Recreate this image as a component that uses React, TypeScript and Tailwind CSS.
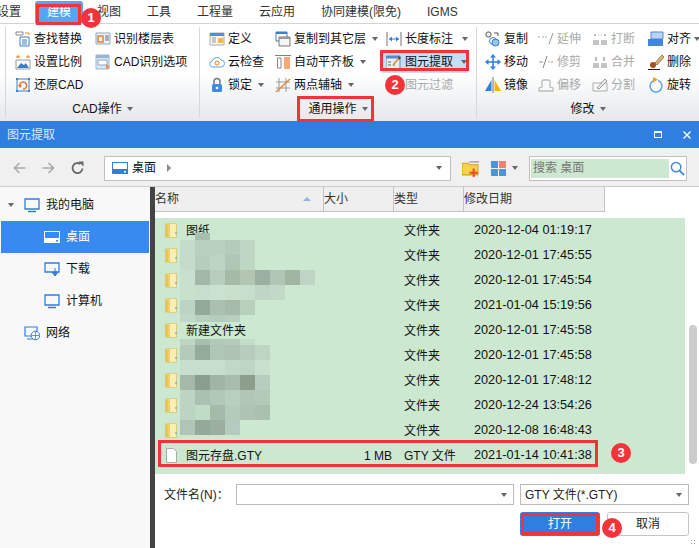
import type { ReactNode } from "react";

const Svg = ({ children, className = "w-4 h-4" }: { children: ReactNode; className?: string }) => (
  <svg viewBox="0 0 16 16" className={className} fill="none">
    {children}
  </svg>
);

const Caret = ({ className = "" }: { className?: string }) => (
  <span className={`inline-block w-0 h-0 border-x-[3.5px] border-x-transparent border-t-[4px] border-t-[#666] ${className}`} />
);

/* ribbon icons */
const icons: Record<string, ReactNode> = {
  find: (
    <>
      <path d="M1 1h7v3H1z" stroke="#888" />
      <path d="M10 2h4v2" stroke="#e8832a" />
      <path d="M5 6h9v9H5z" stroke="#3a7fc8" />
      <path d="M7 9h5M7 11h5M7 13h5" stroke="#3a7fc8" />
    </>
  ),
  floor: (
    <>
      <path d="M1 2h14v11H1z" fill="#eef3f8" stroke="#8aa6c4" />
      <path d="M3 5h5v6H3z" stroke="#e8832a" strokeWidth="1.5" />
      <path d="M10 5h4M10 7h4M10 9h4" stroke="#667" />
    </>
  ),
  scale: (
    <>
      <path d="M1 6h14v9H1z" fill="#fff" stroke="#999" />
      <path d="M2 14l4-5 3 2 2-2 3 5z" fill="#3a7fc8" />
      <path d="M3 1v3M13 1v3M1 3h4M11 3h4" stroke="#e8832a" />
    </>
  ),
  cadopt: (
    <>
      <path d="M1 1h13v14H1z" fill="#dce8f5" stroke="#9bb4d0" />
      <path d="M1 1h13v3H1z" fill="#9bb4d0" />
      <path d="M3 6h9v5H3z" fill="#fff" stroke="#8aa6c4" />
      <path d="M11 10l4 3-4 2z" fill="#f08a5a" />
    </>
  ),
  restore: (
    <>
      <path d="M2 2h12v12H2z" stroke="#3a7fc8" />
      <path d="M1 1h2v2H1zM13 1h2v2h-2zM1 13h2v2H1zM13 13h2v2h-2z" fill="#3a7fc8" />
      <path d="M5 10a3.500 3.500 0 1 1 3 2" stroke="#e8702a" strokeWidth="1.5" />
      <path d="M3 8h4l-2 3z" fill="#e8702a" />
    </>
  ),
  define: (
    <>
      <path d="M1 2h14v12H1z" fill="#f5f5f5" stroke="#aaa" />
      <path d="M1 2h14v3H1z" fill="#4a90e2" />
      <path d="M3 7h4M3 9h4M3 11h4" stroke="#999" />
      <path d="M9 7h5v5H9z" fill="#f5b942" />
    </>
  ),
  copyto: (
    <>
      <path d="M1 1h11v9H1z" fill="#fff" stroke="#3a7fc8" />
      <path d="M1 1h11v2H1z" fill="#3a7fc8" />
      <path d="M4 6h11v9H4z" fill="#f5f5f5" stroke="#777" />
      <path d="M4 6h11v2H4z" fill="#999" />
    </>
  ),
  cloud: (
    <>
      <path d="M4 13a3 3 0 0 1-.5-6A4.500 4.500 0 0 1 12 6a3.500 3.500 0 0 1 0 7z" fill="#fff" stroke="#5aa5e8" />
      <circle cx="8" cy="9" r="2" stroke="#e8832a" />
    </>
  ),
  align2: (
    <>
      <path d="M0 1.500h16" stroke="#5a8ac0" />
      <path d="M2.500 4h3.500v10H2.500z" stroke="#888" />
      <path d="M9 3h6v12H9z" fill="#f7a978" />
    </>
  ),
  lock: (
    <>
      <path d="M5 7V4.500a3 3 0 0 1 6 0V7" stroke="#777" strokeWidth="1.500" />
      <rect x="3" y="7" width="10" height="8" rx="1.500" fill="#3a8ae8" />
      <circle cx="8" cy="11" r="1.300" fill="#fff" />
    </>
  ),
  axis: (
    <>
      <path d="M4 1v14M11 1v14M1 5h14M1 11h14" stroke="#999" />
      <path d="M1 15L15 2" stroke="#e8832a" strokeWidth="1.200" />
    </>
  ),
  length: (
    <>
      <path d="M1 1v14M15 1v14" stroke="#777" />
      <path d="M3 8h10" stroke="#2f7fe0" />
      <path d="M3 8l3-2.500v5zM13 8l-3-2.500v5z" fill="#2f7fe0" />
    </>
  ),
  extract: (
    <>
      <path d="M0 2h14v13H0z" fill="#e6eef8" stroke="#5a8ac0" />
      <path d="M0 2h14v2.500H0z" fill="#5a8ac0" />
      <path d="M2 8h3M2 11h3M7 11h2" stroke="#666" />
      <path d="M7 11l6-7" stroke="#e8832a" strokeWidth="1.500" />
      <path d="M12 2l3 2-2 2z" fill="#444" />
    </>
  ),
  filter: <path d="M1 2h4v4H1z" stroke="#bbb" />,
  copy: (
    <>
      <rect x="1" y="1" width="5" height="5" rx="2" stroke="#555" />
      <path d="M9 2h4v3" stroke="#555" />
      <circle cx="8" cy="10" r="3.500" stroke="#2f7fe0" />
      <circle cx="10.500" cy="11.500" r="3.500" fill="#9cc4ee" stroke="#2f7fe0" />
    </>
  ),
  extend: (
    <>
      <path d="M0 6h2M4 6h2M7 6h2" stroke="#aaa" />
      <path d="M11 13l4-11" stroke="#999" />
    </>
  ),
  move: (
    <>
      <path d="M8 3v10M3 8h10" stroke="#2f7fe0" strokeWidth="1.500" />
      <path d="M8 0l3 3.500H5zM8 16l3-3.500H5zM0 8l3.500-3v6zM16 8l-3.500-3v6z" fill="#2f7fe0" />
    </>
  ),
  trim: (
    <>
      <path d="M1 8h4M10 8h1.500M13 8h2" stroke="#999" />
      <path d="M5 14L9 2" stroke="#888" />
    </>
  ),
  mirror: (
    <>
      <path d="M8 0v16" stroke="#777" />
      <path d="M6.500 14H0L6.500 3z" fill="#2f7fe0" />
      <path d="M9.500 14H16L9.500 3z" fill="#f5b400" />
    </>
  ),
  offset: <path d="M1 14v-3l3-1V6a2 2 0 0 1 2-3h4a2 2 0 0 1 2 3v4l3 1v3z" stroke="#bbb" strokeWidth="1.300" />,
  brk: (
    <>
      <path d="M1 9h6v5H1zM9 9h6v5H9z" fill="#c4c4c4" />
      <path d="M2 3h2v2H2zM12 3h2v2h-2z" fill="#bbb" />
      <path d="M6 4h1M9 4h1" stroke="#bbb" />
    </>
  ),
  merge: (
    <>
      <path d="M1 9h6v5H1zM9 9h6v5H9z" fill="#c4c4c4" />
      <path d="M3 3h2v4H3zM11 3h2v4h-2z" fill="#bbb" />
    </>
  ),
  split: (
    <>
      <path d="M1 6h14v8H1z" stroke="#aaa" />
      <path d="M5 11l8-9 2 2-8 8z" fill="#eee" stroke="#999" />
    </>
  ),
  align: (
    <>
      <path d="M3 1h12v7H3z" fill="#b8d4f4" stroke="#4a8ad8" />
      <path d="M0 8h15v7H0z" fill="#3f86dc" />
    </>
  ),
  del: (
    <>
      <path d="M7 9l7-8 2 2-7 8z" fill="#d8b67a" stroke="#7a5a30" strokeWidth="0.700" />
      <circle cx="5" cy="11" r="3" fill="#a8501e" />
      <path d="M0 15.500h12" stroke="#222" />
    </>
  ),
  rotate: (
    <>
      <path d="M6 3.500a6 6 0 1 0 4 0" stroke="#5aa5e8" strokeWidth="1.500" />
      <path d="M5 0l5 2.500-5 3z" fill="#f09a2a" />
    </>
  ),
};

const Tool = ({ icon, label, off, caret, gap = "ml-[6px]" }: { icon: string; label: string; off?: boolean; caret?: boolean; gap?: string }) => (
  <div className={`flex items-center h-[23px] whitespace-nowrap ${off ? "text-[#aaa]" : "text-[#111]"}`}>
    <span className="w-[19px] shrink-0">
      <Svg>{icons[icon]}</Svg>
    </span>
    {label}
    {caret && <Caret className={gap} />}
  </div>
);

const GroupLabel = ({ text }: { text: string }) => (
  <div className="h-[25px] flex items-center justify-center text-[#111]">
    {text}
    <Caret className="ml-[5px]" />
  </div>
);

const Sep = () => <div className="w-px h-[91px] bg-[#d6d8da] shrink-0" />;

const Ribbon = () => (
  <div className="h-[97px] flex pt-[3px] text-[12px] bg-gradient-to-b from-white via-white to-[#e6e8ea]">
    <div className="w-[5px] shrink-0" />
    <Sep />
    {/* CAD操作 */}
    <div className="w-[193px] shrink-0">
      <div className="pl-[9px] grid grid-cols-[80px_1fr]">
        <Tool icon="find" label="查找替换" />
        <Tool icon="floor" label="识别楼层表" />
        <Tool icon="scale" label="设置比例" />
        <Tool icon="cadopt" label="CAD识别选项" />
        <Tool icon="restore" label="还原CAD" />
      </div>
      <GroupLabel text="CAD操作" />
    </div>
    <Sep />
    {/* 通用操作 */}
    <div className="w-[276px] shrink-0">
      <div className="pl-[9px] grid grid-cols-[66px_111px_1fr]">
        <Tool icon="define" label="定义" />
        <Tool icon="copyto" label="复制到其它层" caret />
        <Tool icon="length" label="长度标注" caret gap="ml-[9px]" />
        <Tool icon="cloud" label="云检查" />
        <Tool icon="align2" label="自动平齐板" caret />
        <div className="flex items-center h-[23px] -ml-[4px] w-[86px] bg-[#c4def8] pl-[4px] text-[#111] whitespace-nowrap">
          <span className="w-[19px] shrink-0">
            <Svg>{icons.extract}</Svg>
          </span>
          图元提取
          <Caret className="ml-[8px]" />
        </div>
        <Tool icon="lock" label="锁定" caret />
        <Tool icon="axis" label="两点辅轴" caret />
        <Tool icon="filter" label="图元过滤" off />
      </div>
      <GroupLabel text="通用操作" />
    </div>
    <Sep />
    {/* 修改 */}
    <div className="flex-1 min-w-0">
      <div className="pl-[8px] grid grid-cols-[53px_54px_56px_1fr]">
        <Tool icon="copy" label="复制" />
        <Tool icon="extend" label="延伸" off />
        <Tool icon="brk" label="打断" off />
        <Tool icon="align" label="对齐" caret gap="ml-[3px]" />
        <Tool icon="move" label="移动" />
        <Tool icon="trim" label="修剪" off />
        <Tool icon="merge" label="合并" off />
        <Tool icon="del" label="删除" />
        <Tool icon="mirror" label="镜像" />
        <Tool icon="offset" label="偏移" off />
        <Tool icon="split" label="分割" off />
        <Tool icon="rotate" label="旋转" />
      </div>
      <GroupLabel text="修改" />
    </div>
  </div>
);

const MenuBar = () => (
  <div className="h-[24px] flex items-center text-[12px] text-[#333] border-b border-[#d4d4d4] -ml-[3px] pl-0 bg-white">
    <span className="w-[38px]">设置</span>
    <span className="w-[48px] h-[22px] mt-[1px] bg-[#55a4f6] text-white rounded-t-[3px] flex items-center justify-center">建模</span>
    <span className="ml-[14px] w-[50px]">视图</span>
    <span className="w-[50px]">工具</span>
    <span className="w-[62px]">工程量</span>
    <span className="w-[62px]">云应用</span>
    <span className="w-[106px]">协同建模(限免)</span>
    <span>IGMS</span>
  </div>
);

const PcIcon = ({ color = "#2f7fe0" }: { color?: string }) => (
  <Svg>
    <path d="M1 2h14v10H1z" stroke={color} strokeWidth="1.300" />
    <path d="M4 14.500h8" stroke={color} strokeWidth="1.500" />
  </Svg>
);

const DeskIcon = ({ color = "#2f7fe0", dot = "#fff" }: { color?: string; dot?: string }) => (
  <Svg>
    <path d="M0 2h16v12H0z" fill={color} />
    <path d="M1 3h14v6H1z" fill={dot} />
    <path d="M12 11h2v1.500h-2z" fill={dot} />
  </Svg>
);

const TitleBar = () => (
  <div className="h-[27px] bg-[#2f7fe0] flex items-center pl-[7px] pr-[8px] text-[12px] text-[#dce9fa]">
    <span className="flex-1">图元提取</span>
    <span className="w-[8px] h-[7px] border border-white border-t-2 mr-[21px]" />
    <svg viewBox="0 0 8 8" className="w-[8px] h-[8px]">
      <path d="M0.500 0.500l7 7M7.500 0.500l-7 7" stroke="#fff" strokeWidth="1.300" />
    </svg>
  </div>
);

const Toolbar = () => (
  <div className="h-[39px] bg-[#f0f0f0] border-b border-[#cccccc] flex items-center pt-[2px] text-[12px]">
    <svg viewBox="0 0 14 14" className="w-[15px] h-[14px] ml-[12px]">
      <path d="M13 7H2M7 2L2 7l5 5" stroke="#aaa" strokeWidth="1.600" fill="none" />
    </svg>
    <svg viewBox="0 0 14 14" className="w-[15px] h-[14px] ml-[14px]">
      <path d="M1 7h11M7 2l5 5-5 5" stroke="#aaa" strokeWidth="1.600" fill="none" />
    </svg>
    <svg viewBox="0 0 14 14" className="w-[15px] h-[14px] ml-[14px]">
      <path d="M12 7.500A5 5 0 1 1 10 3" stroke="#666" strokeWidth="1.800" fill="none" />
      <path d="M8 0.500h5v5z" fill="#666" />
    </svg>
    <div className="ml-[19px] w-[347px] h-[25px] bg-white border border-[#c0c0c0] flex items-center pl-[7px] pr-[8px] text-[#111]">
      <DeskIcon />
      <span className="ml-[4px]">桌面</span>
      <span className="ml-[11px] w-0 h-0 border-y-[4px] border-y-transparent border-l-[4px] border-l-[#888]" />
      <span className="flex-1" />
      <Caret />
    </div>
    <svg viewBox="0 0 16 16" className="w-[17px] h-[17px] ml-[11px]">
      <path d="M0 3h6l1 1.500h8V14H0z" fill="#f7d24a" stroke="#d8a020" />
      <path d="M7 1h9v1.500H7z" fill="#aaa" />
      <path d="M11 8v8M7 12h8" stroke="#e8501e" strokeWidth="2" />
    </svg>
    <div className="ml-[12px] grid grid-cols-[7px_7px] gap-px">
      <span className="h-[7px] bg-[#4a94d8]" />
      <span className="h-[7px] bg-[#f08070]" />
      <span className="h-[7px] bg-[#4a94d8]" />
      <span className="h-[7px] bg-[#4a94d8]" />
    </div>
    <Caret className="ml-[6px]" />
    <div className="ml-[11px] w-[158px] h-[25px] bg-white border border-[#c0c0c0] flex items-center pl-[1px]">
      <span className="w-[138px] h-[19px] bg-[#cce8d0] text-[#777] pl-[2px] leading-[19px]">搜索 桌面</span>
      <svg viewBox="0 0 16 16" className="w-[15px] h-[15px] ml-[1px]">
        <circle cx="6.500" cy="6.500" r="5" stroke="#3f8ad8" strokeWidth="1.600" fill="none" />
        <path d="M10 10l5 5" stroke="#3f8ad8" strokeWidth="2" />
      </svg>
    </div>
  </div>
);

const Sidebar = () => (
  <div className="w-[150px] shrink-0 bg-[#f8f8f8] text-[12px] text-[#111] pt-[2px]">
    <div className="h-[32px] flex items-center pl-[8px]">
      <Caret className="mr-[10px]" />
      <PcIcon />
      <span className="ml-[6px]">我的电脑</span>
    </div>
    <div className="h-[32px] w-[148px] ml-px flex items-center pl-[43px] bg-[#398af0] text-white">
      <DeskIcon color="#fff" dot="#398af0" />
      <span className="ml-[6px]">桌面</span>
    </div>
    <div className="h-[32px] flex items-center pl-[44px]">
      <Svg>
        <path d="M1 2h14v9H1z" stroke="#2f7fe0" strokeWidth="1.300" />
        <path d="M11 7v6M8 11l3 4 3-4z" fill="#2f7fe0" stroke="#2f7fe0" />
      </Svg>
      <span className="ml-[6px]">下载</span>
    </div>
    <div className="h-[32px] flex items-center pl-[44px]">
      <PcIcon />
      <span className="ml-[6px]">计算机</span>
    </div>
    <div className="h-[32px] flex items-center pl-[24px]">
      <Svg>
        <path d="M1 2h12v9H1zM3 14h7" stroke="#2f7fe0" strokeWidth="1.200" />
        <circle cx="11.500" cy="10.500" r="4.300" fill="#fff" stroke="#2f7fe0" />
        <path d="M7.500 10.500h8M11.500 6.500v8" stroke="#2f7fe0" strokeWidth="0.800" />
      </Svg>
      <span className="ml-[6px]">网络</span>
    </div>
  </div>
);

const Folder = () => (
  <svg viewBox="0 0 12 15" className="w-[13px] h-[15px]">
    <path d="M0 1h11v13H0z" fill="#f5de8a" stroke="#d8b850" strokeWidth="0.700" />
    <path d="M4 0.500h7v14H4z" fill="#fbeeb4" stroke="#dcc060" strokeWidth="0.600" />
    <path d="M0 2h3v12H0z" fill="#e8c45a" />
    <path d="M10 9h1v2h-1z" fill="#3aa0e8" />
  </svg>
);

const rows = [
  { name: "图纸", date: "2020-12-04 01:19:17" },
  { name: "", date: "2020-12-01 17:45:55" },
  { name: "", date: "2020-12-01 17:45:54" },
  { name: "", date: "2021-01-04 15:19:56" },
  { name: "新建文件夹", date: "2020-12-01 17:45:58" },
  { name: "", date: "2020-12-01 17:45:58" },
  { name: "", date: "2020-12-01 17:48:12" },
  { name: "", date: "2020-12-24 13:54:26" },
  { name: "", date: "2020-12-08 16:48:43" },
];

// pixelated blur over the hidden names, row by row
const mosaic: string[][] = [
  ["", "#a9bfae"],
  ["#c4dcca", "#b9d0bf", "#b9d0bf", "#b3cbb9", "#bed6c4"],
  ["#c4dcca", "#b5cdba", "#bcd4c1", "#aec6b4", "#bed6c4"],
  ["#c8e0cd", "#a3b8a9", "#b8cdbb", "#a6baa8", "#b2c6b2", "#9bb0a3", "#b1c6b5", "#a1b5a3", "#bfd4c4"],
  ["#c8e0cc", "#c6decb", "#c9e2cf", "#c8e0cc", "#c6decb", "#bfd6c4", "#c2d9c7"],
  ["#bcd4c3", "#93a99a", "#abc0ae", "#a6bba9", "#b8cfbc"],
  ["#c0d8c6", "#b8d0be", "#b4ccba", "#b9cfbd"],
  [],
  ["#bfd6c4", "#a9bfae", "#b3c9b7", "#b5cbba", "#c4dcca"],
  ["#b4cbb9", "#94aa9b", "#b0c6b4", "#aec3b1", "#b7ccba", "#bed5c3"],
  ["#c7e0cd", "#c6dfcc", "#c6dfcc", "#c0d8c6", "#bdd5c3", "#c8e0cd"],
  ["#a5b9a8", "#8a9e90", "#a0b5a4", "#a8bcab", "#8e9e8c", "#b6cdbf"],
  ["#bcd4c1", "#aac0b0", "#b2c8b6", "#b9cfbd", "#b1c6b5", "#b4c9b7"],
  ["#bcd4c1", "#c0dbc6", "#a5baa9", "#b5cbb9", "#aec3b2", "#abc1b0"],
  ["#b0c5b4", "#94a99a", "#9cae9d", "#b5cbbf"],
];

const Mosaic = () => (
  <div className="absolute left-[25px] top-[15px] grid grid-cols-[repeat(9,15px)] grid-rows-[7px_15px_15px_15px_15px_15px_7px_17px_6px_15px_15px_15px_15px_15px_15px]">
    {mosaic.map((line, r) =>
      Array.from({ length: 9 }, (_, c) => (
        <span key={`${r}-${c}`} style={{ backgroundColor: line[c] || "transparent" }} />
      ))
    )}
  </div>
);

const FileRow = ({ icon, name, size, type, date }: { icon: ReactNode; name: string; size?: string; type: string; date: string }) => (
  <div className="h-[25px] flex items-center whitespace-nowrap">
    <div className="w-[169px] flex items-center pl-[10px]">
      <span className="w-[21px]">{icon}</span>
      {name}
    </div>
    <div className="w-[68px] text-right">{size}</div>
    <div className="w-[82px] pl-[12px]">{type}</div>
    <div className="text-[12.7px]">{date}</div>
  </div>
);

const FileList = () => (
  <div className="flex-1 flex-col flex min-w-0 text-[12px] text-[#111]">
    <div className="h-[25px] flex text-[#333] bg-white">
      <div className="w-[169px] bg-[#efefef] border-b border-r border-[#c4c4c4] flex items-center justify-between pr-[12px]">
        名称
        <span className="w-0 h-0 border-x-[4px] border-x-transparent border-b-[4px] border-b-[#8fb4d8]" />
      </div>
      <div className="w-[70px] bg-[#efefef] border-b border-r border-[#c4c4c4] flex items-center">大小</div>
      <div className="w-[70px] bg-[#efefef] border-b border-r border-[#c4c4c4] flex items-center">类型</div>
      <div className="w-[141px] bg-[#efefef] border-b border-r border-[#c4c4c4] flex items-center">修改日期</div>
    </div>
    <div className="h-[6px] bg-white" />
    <div className="flex">
      <div className="relative w-[530px] h-[256px] bg-[#cde8d1]">
        {rows.map((r) => (
          <FileRow key={r.date + r.name} icon={<Folder />} name={r.name} type="文件夹" date={r.date} />
        ))}
        <FileRow
          icon={
            <svg viewBox="0 0 12 15" className="w-[13px] h-[15px]">
              <path d="M1 0.500h7l3 3v11H1z" fill="#fff" stroke="#aaa" />
            </svg>
          }
          name="图元存盘.GTY"
          size="1 MB"
          type="GTY 文件"
          date="2021-01-14 10:41:38"
        />
        <Mosaic />
      </div>
      {/* scrollbar */}
      <div className="flex-1 bg-white flex flex-col items-center h-[256px] pt-[107px]">
        <div className="w-[8px] h-[139px] bg-[#cdcdcd] rounded-[4px] ml-[1px]" />
      </div>
    </div>
    <div className="relative flex-1 bg-white pt-[10px] text-[#222]">
      <div className="flex items-center">
        <span className="w-[81px] pl-[9px]">文件名(N)：</span>
        <div className="w-[278px] h-[21px] border border-[#bbbbbb] flex items-center justify-end pr-[6px]">
          <Caret />
        </div>
        <div className="ml-[6px] w-[169px] h-[21px] border border-[#bbbbbb] flex items-center justify-between pl-[4px] pr-[6px]">
          GTY 文件(*.GTY)
          <Caret />
        </div>
      </div>
      <div className="flex justify-end gap-[7px] pr-[10px] mt-[7px]">
        <div className="w-[80px] h-[24px] rounded-[3px] bg-[#2f7fe0] text-white flex items-center justify-center">打开</div>
        <div className="w-[82px] h-[24px] rounded-[3px] border border-[#c4c4c4] flex items-center justify-center">取消</div>
      </div>
      <div className="absolute right-[2px] bottom-[2px] w-[7px] h-[7px] bg-[radial-gradient(#999_1px,transparent_1px)] bg-[length:3px_3px]" />
    </div>
  </div>
);

const Badge = ({ n, className }: { n: number; className: string }) => (
  <div className={`absolute w-[20px] h-[20px] rounded-full bg-[#f0343a] text-white text-[13px] font-bold flex items-center justify-center ${className}`}>
    {n}
  </div>
);

const Box = ({ className }: { className: string }) => (
  <div className={`absolute border-[3px] border-[#f0343a] ${className}`} />
);

export default function App() {
  return (
    <div className="relative w-[699px] h-[548px] overflow-hidden bg-white [font-family:'Liberation_Sans','Noto_Sans_CJK_SC',sans-serif]">
      <MenuBar />
      <Ribbon />
      <TitleBar />
      <Toolbar />
      <div className="flex h-[361px]">
        <Sidebar />
        <div className="w-[5px] bg-[#444444] shrink-0" />
        <FileList />
      </div>

      {/* tutorial markers */}
      <Box className="left-[36px] top-[4px] w-[45px] h-[21px]" />
      <Box className="left-[380px] top-[50px] w-[89px] h-[21px]" />
      <Box className="left-[297px] top-[96px] w-[77px] h-[26px]" />
      <Box className="left-[158px] top-[440px] w-[440px] h-[27px]" />
      <Box className="left-[521px] top-[513px] w-[78px] h-[22px]" />
      <Badge n={1} className="left-[81px] top-[8px]" />
      <Badge n={2} className="left-[385px] top-[75px]" />
      <Badge n={3} className="left-[611px] top-[443px]" />
      <Badge n={4} className="left-[602px] top-[518px]" />
    </div>
  );
}
